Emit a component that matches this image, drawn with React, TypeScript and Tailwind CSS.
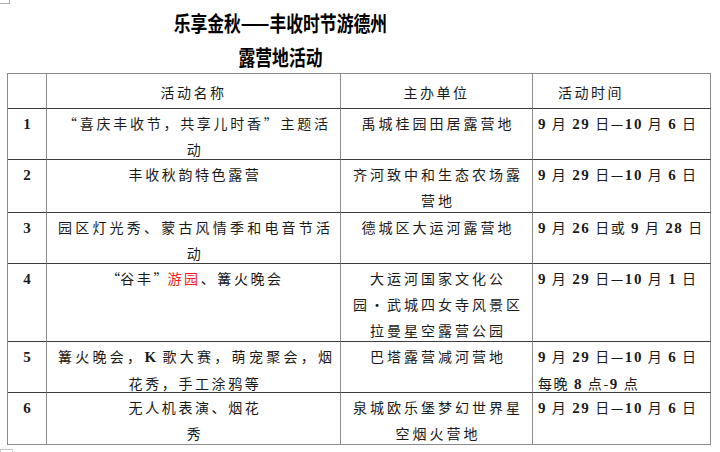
import React from 'react';

// Activity list for the autumn camping events, laid out like the Word table it came from.

const CJK = '"Noto Sans CJK SC", "Noto Sans CJK JP", sans-serif';

// Latin letters and digits are set in a bold serif, as in the source document;
// curly quotes get a full-width box like a Song font gives them.
function T({ s }: { s: string }) {
  const parts = s.split(/([0-9A-Za-z]+|“|”)/);
  return (
    <>
      {parts.map((p, i) => {
        if (p === '“') return <span key={i} className="inline-block w-[14px] text-right tracking-normal">“</span>;
        if (p === '”') return <span key={i} className="inline-block w-[14px] text-left tracking-normal">”</span>;
        if (/^[0-9A-Za-z]+$/.test(p))
          return (
            <span key={i} className="font-bold text-[15px] font-['Liberation_Serif',serif]">
              {p}
            </span>
          );
        return <React.Fragment key={i}>{p}</React.Fragment>;
      })}
    </>
  );
}

type Line = { t: React.ReactNode; cls?: string };

type Row = {
  n: string;
  h: string;
  name: Line[];
  org: string[];
  time: string[];
};

const rows: Row[] = [
  {
    n: '1',
    h: 'h-[51px]',
    name: [
      { t: <T s="“喜庆丰收节，共享儿时香”主题活" />, cls: 'pl-[16px] pr-[12px] text-justify [text-align-last:justify]' },
      { t: '动' },
    ],
    org: ['禹城桂园田居露营地'],
    time: ['9 月 29 日—10 月 6 日'],
  },
  {
    n: '2',
    h: 'h-[53px]',
    name: [{ t: '丰收秋韵特色露营' }],
    org: ['齐河致中和生态农场露', '营地'],
    time: ['9 月 29 日—10 月 6 日'],
  },
  {
    n: '3',
    h: 'h-[51px]',
    name: [
      { t: '园区灯光秀、蒙古风情季和电音节活', cls: 'pl-[11px] pr-[10px] text-justify [text-align-last:justify]' },
      { t: '动' },
    ],
    org: ['德城区大运河露营地'],
    time: ['9 月 26 日或 9 月 28 日'],
  },
  {
    n: '4',
    h: 'h-[78px]',
    name: [
      {
        t: (
          <>
            <T s="“谷丰”" />
            <span className="text-[#f21d1d]">游园</span>、篝火晚会
          </>
        ),
      },
    ],
    org: ['大运河国家文化公', '园·武城四女寺风景区', '拉曼星空露营公园'],
    time: ['9 月 29 日—10 月 1 日'],
  },
  {
    n: '5',
    h: 'h-[51px]',
    name: [
      { t: <T s="篝火晚会，K 歌大赛，萌宠聚会，烟" />, cls: 'pl-[11px] pr-[8px] text-justify [text-align-last:justify]' },
      { t: '花秀，手工涂鸦等' },
    ],
    org: ['巴塔露营减河营地'],
    time: ['9 月 29 日—10 月 6 日', '每晚 8 点-9 点'],
  },
  {
    n: '6',
    h: 'h-[52px]',
    name: [{ t: '无人机表演、烟花' }, { t: '秀' }],
    org: ['泉城欧乐堡梦幻世界星', '空烟火营地'],
    time: ['9 月 29 日—10 月 6 日'],
  },
];

const cell = 'border-r border-b border-r-[#8c8c8c] border-b-[#3c3c3c] pt-px leading-[26px]';

export default function App() {
  return (
    <div
      className="relative w-[720px] h-[452px] overflow-hidden bg-white text-[14px] text-[#1a1a1a]"
      style={{ fontFamily: CJK }}
    >
      {/* page corner marks */}
      <div className="absolute left-0 top-0 w-[10px] h-[4px] border-r border-b border-[#b0b0b0]" />
      <div className="absolute left-0 top-[449px] w-[13px] h-[6px] border border-[#c8c8c8]" />

      <div className="w-[560px] pt-[5px] text-center font-bold text-[21px] leading-[34px] text-black">
        <div>
          <span className="inline-block scale-x-[0.8]">乐享金秋——丰收时节游德州</span>
        </div>
        <div>
          <span className="inline-block scale-x-[0.8]">露营地活动</span>
        </div>
      </div>

      <div className="ml-[7px] w-[704px] grid grid-cols-[39px_294px_192px_178px] border-l border-t border-[#8c8c8c]">
        <div className={`${cell} h-[35px]`} />
        <div className={`${cell} h-[35px] flex items-center justify-center tracking-[2.5px]`}>活动名称</div>
        <div className={`${cell} h-[35px] flex items-center justify-center tracking-[2.5px]`}>主办单位</div>
        <div className={`${cell} h-[35px] flex items-center pl-[25px] tracking-[2.5px]`}>活动时间</div>

        {rows.map((r, i) => {
          const last = i === rows.length - 1 ? 'border-b-[#8c8c8c]' : '';
          return (
            <React.Fragment key={r.n}>
              <div className={`${cell} ${r.h} ${last} text-center`}>
                <T s={r.n} />
              </div>
              <div className={`${cell} ${r.h} ${last}`}>
                {r.name.map((l, k) => (
                  <div key={k} className={l.cls ?? 'text-center tracking-[2.6px] pl-[3px]'}>
                    {l.t}
                  </div>
                ))}
              </div>
              <div className={`${cell} ${r.h} ${last}`}>
                {r.org.map((l, k) => (
                  <div key={k} className="text-center tracking-[3px] pl-[3px]">
                    {l}
                  </div>
                ))}
              </div>
              <div className={`${cell} ${r.h} ${last} pl-[5px]`}>
                {r.time.map((l, k) => (
                  <div key={k} className="tracking-[1.6px] whitespace-nowrap">
                    <T s={l} />
                  </div>
                ))}
              </div>
            </React.Fragment>
          );
        })}
      </div>
    </div>
  );
}
